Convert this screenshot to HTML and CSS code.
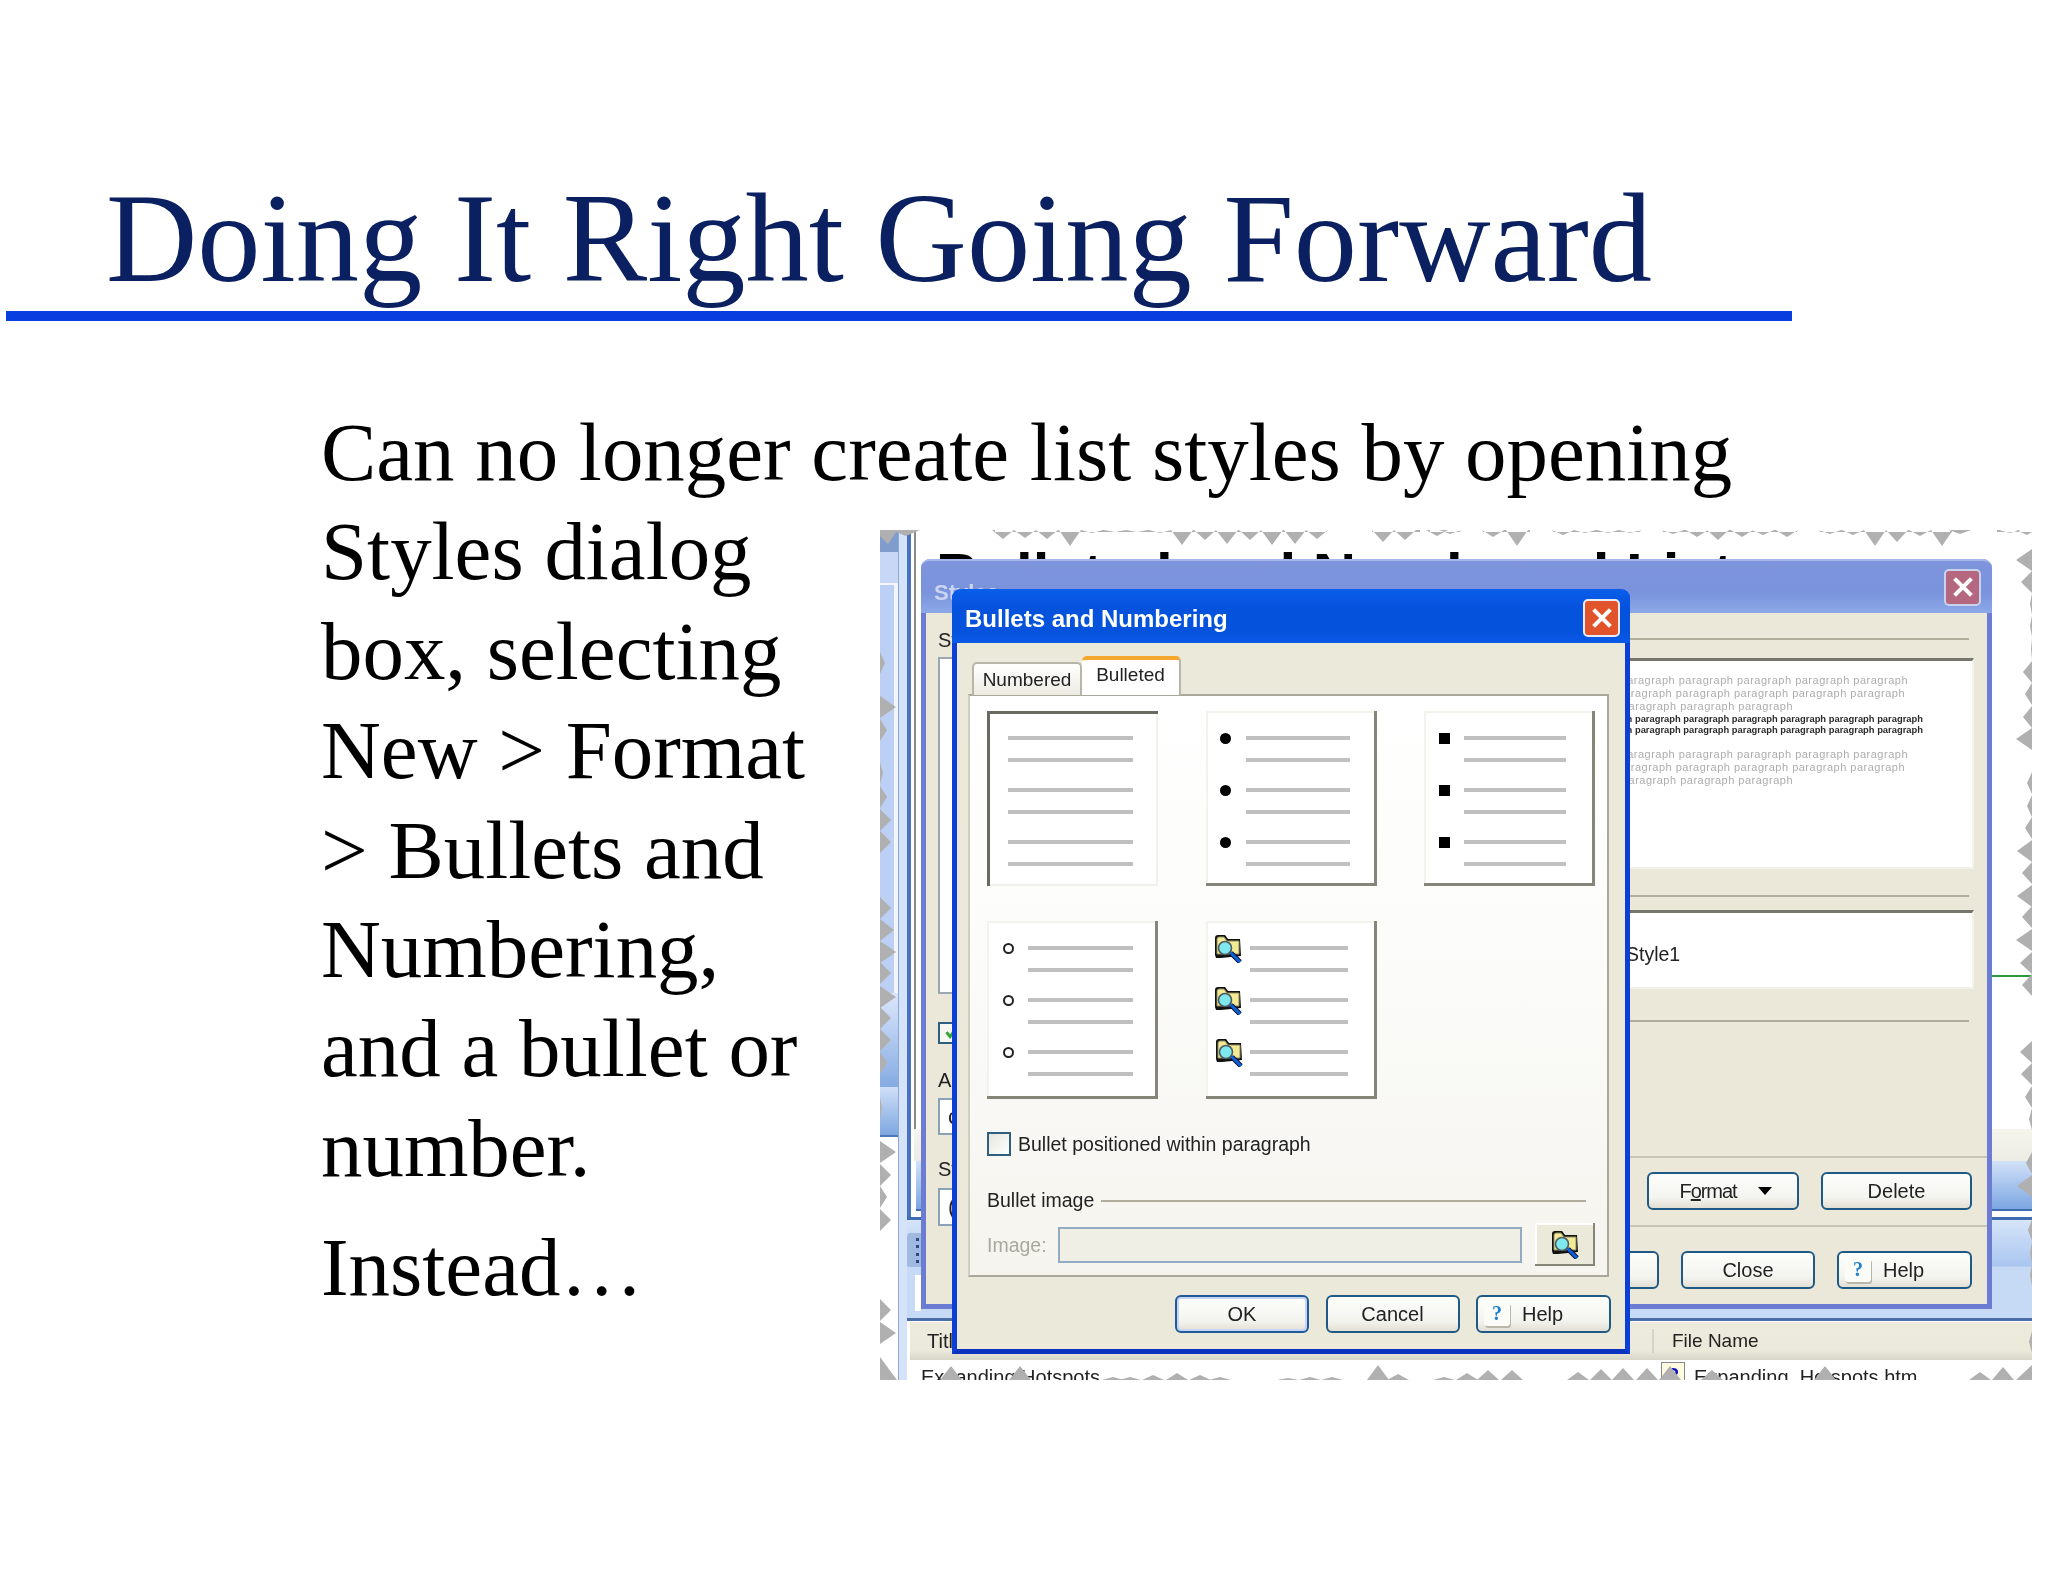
FILE: index.html
```html
<!DOCTYPE html>
<html lang="en">
<head>
<meta charset="utf-8">
<title>Doing It Right Going Forward</title>
<link rel="stylesheet" href="styles.css">
</head>
<body>
<svg class="defs" width="0" height="0" aria-hidden="true">
  <symbol id="folder" viewBox="0 0 28 29">
    <path d="M1 21V4Q1 1 4 1H11L14 5H26L27 22L7 24H2Z" fill="#111"/>
    <path d="M3 19V5Q3 3 5 3H10L13 7H25V20H3Z" fill="#f3ea96" stroke="#8d8a5c" stroke-width="1"/>
    <path d="M17 19L26 28" stroke="#101030" stroke-width="5"/>
    <path d="M16 18L26 28" stroke="#0a62d8" stroke-width="3"/>
    <circle cx="11" cy="14" r="6.5" fill="#7fe8ee" stroke="#4d5a60" stroke-width="1.6"/>
  </symbol>
  <symbol id="closex" viewBox="0 0 20 20">
    <path d="M3 3L17 17M17 3L3 17" stroke="#fff" stroke-width="3.4" fill="none"/>
  </symbol>
</svg>

<main class="slide">
  <h1 class="title">Doing It Right Going Forward</h1>
  <section class="content">
    <p class="lead">Can no longer create list styles by opening</p>
    <div class="columns">
      <div class="copy">
        <p class="para">Styles dialog<br>box, selecting<br>New &gt; Format<br>&gt; Bullets and<br>Numbering,<br>and a bullet or<br>number.</p>
        <p class="para para-next">Instead…</p>
      </div>

      <figure class="shot">
        <div class="app">
          <div class="nav">
            <div class="nav-cap"></div>
            <div class="nav-btn"></div>
            <div class="nav-list"></div>
            <div class="nav-blue-a"></div>
            <div class="nav-blue-b"></div>
            <div class="nav-rest"></div>
          </div>
          <div class="split"></div>
          <div class="doc">
            <div class="doc-top">
              <div class="doc-page">
                <div class="doc-heading">Bulleted and Numbered Lists</div>
                <div class="doc-green"></div>
              </div>
              <div class="doc-band-pale"></div>
              <div class="doc-band-blue"></div>
            </div>
            <div class="doc-mid">
              <div class="grip"><i></i><i></i><i></i><i></i></div>
              <div class="mid-white"></div>
            </div>
            <div class="doc-list">
              <div class="list-head">
                <span class="th-title">Title</span>
                <span class="th-file">File Name</span>
              </div>
              <div class="list-row">
                <span class="td-title">Expanding Hotspots</span>
                <span class="td-icon">?</span>
                <span class="td-file">Expanding_Hotspots.htm</span>
              </div>
            </div>
          </div>
        </div>

        <div class="win-styles">
          <div class="styles-bar">
            <span class="styles-name">Styles</span>
            <span class="styles-close"><svg class="x-icon"><use href="#closex"/></svg></span>
          </div>
          <div class="styles-body">
            <div class="s-left">
              <div class="s-label">Styles:</div>
              <div class="s-list"></div>
              <div class="s-check"><svg viewBox="0 0 20 20" class="s-tick"><path d="M5 9L9 14L16 5" stroke="#35a43a" stroke-width="3.4" fill="none"/></svg></div>
              <div class="s-label s-label-a">Apply to:</div>
              <div class="s-select">current</div>
              <div class="s-label s-label-b">Style:</div>
              <div class="s-select s-select-b">(none)</div>
            </div>
            <div class="s-right">
              <div class="s-rule s-rule-1"></div>
              <div class="s-preview">
                <div class="pv pv-gray">paragraph paragraph paragraph paragraph paragraph paragraph</div>
                <div class="pv pv-gray pv-b">paragraph paragraph paragraph paragraph paragraph paragraph</div>
                <div class="pv pv-gray pv-c">paragraph paragraph paragraph</div>
                <div class="pv pv-dark">paragraph paragraph paragraph paragraph paragraph paragraph paragraph paragraph</div>
                <div class="pv pv-dark">paragraph paragraph paragraph paragraph paragraph paragraph paragraph paragraph</div>
                <div class="pv pv-gray pv-gap">paragraph paragraph paragraph paragraph paragraph paragraph</div>
                <div class="pv pv-gray pv-b">paragraph paragraph paragraph paragraph paragraph paragraph</div>
                <div class="pv pv-gray pv-c">paragraph paragraph paragraph</div>
              </div>
              <div class="s-rule s-rule-2"></div>
              <div class="s-name-box">Style1</div>
              <div class="s-rule s-rule-3"></div>
              <div class="s-rule s-rule-full s-rule-4"></div>
              <div class="s-actions s-actions-a">
                <button class="btn btn-format"><span class="format-label">F<u>o</u>rmat</span><i class="caret"></i></button>
                <button class="btn btn-delete">Delete</button>
              </div>
              <div class="s-rule s-rule-full s-rule-5"></div>
              <div class="s-actions s-actions-b">
                <button class="btn btn-std">OK</button>
                <button class="btn btn-std">Close</button>
                <button class="btn btn-help"><span class="help-tile">?</span><span>Help</span></button>
              </div>
            </div>
          </div>
        </div>

        <div class="win-bullets">
          <div class="b-bar">
            <span class="b-name">Bullets and Numbering</span>
            <span class="b-close"><svg class="x-icon"><use href="#closex"/></svg></span>
          </div>
          <div class="b-body">
            <div class="tabs">
              <span class="tab">Numbered</span>
              <span class="tab tab-on">Bulleted</span>
            </div>
            <div class="panel">
              <div class="opts">
                <div class="opt opt-none is-selected">
                  <div class="group"><span></span><b class="ln"></b><span></span><b class="ln"></b></div>
                  <div class="group"><span></span><b class="ln"></b><span></span><b class="ln"></b></div>
                  <div class="group"><span></span><b class="ln"></b><span></span><b class="ln"></b></div>
                </div>
                <div class="opt opt-disc">
                  <div class="group"><i class="disc"></i><b class="ln"></b><span></span><b class="ln"></b></div>
                  <div class="group"><i class="disc"></i><b class="ln"></b><span></span><b class="ln"></b></div>
                  <div class="group"><i class="disc"></i><b class="ln"></b><span></span><b class="ln"></b></div>
                </div>
                <div class="opt opt-square">
                  <div class="group"><i class="square"></i><b class="ln"></b><span></span><b class="ln"></b></div>
                  <div class="group"><i class="square"></i><b class="ln"></b><span></span><b class="ln"></b></div>
                  <div class="group"><i class="square"></i><b class="ln"></b><span></span><b class="ln"></b></div>
                </div>
                <div class="opt opt-circle">
                  <div class="group"><i class="circle"></i><b class="ln"></b><span></span><b class="ln"></b></div>
                  <div class="group"><i class="circle"></i><b class="ln"></b><span></span><b class="ln"></b></div>
                  <div class="group"><i class="circle"></i><b class="ln"></b><span></span><b class="ln"></b></div>
                </div>
                <div class="opt opt-image">
                  <div class="group"><svg class="folder"><use href="#folder"/></svg><b class="ln"></b><span></span><b class="ln"></b></div>
                  <div class="group"><svg class="folder"><use href="#folder"/></svg><b class="ln"></b><span></span><b class="ln"></b></div>
                  <div class="group"><svg class="folder folder-shift"><use href="#folder"/></svg><b class="ln"></b><span></span><b class="ln"></b></div>
                </div>
              </div>
              <label class="within"><i class="box"></i><span>Bullet positioned within paragraph</span></label>
              <div class="legend"><span>Bullet image</span><i></i></div>
              <div class="image-row">
                <span class="image-label">Image:</span>
                <span class="image-input"></span>
                <span class="image-browse"><svg class="folder"><use href="#folder"/></svg></span>
              </div>
            </div>
            <div class="b-actions">
              <button class="btn btn-std btn-default">OK</button>
              <button class="btn btn-std">Cancel</button>
              <button class="btn btn-help"><span class="help-tile">?</span><span>Help</span></button>
            </div>
          </div>
        </div>

        <svg class="torn" viewBox="0 0 1152 850" aria-hidden="true">
          <path d="M0 0H40L26 6L16 2L8 14L0 6Z M115 0h332v2h-332z M492 0h48v2h-48z M550 0h30v2h-30z M603 0h47v2h-47z M673 0h87v2h-87z M783 0h134v2h-134z M940 0h130v2h-130z M1117 0h35v2h-35z
          M112 0l11 9l11-9z M134 0l11 8l11-8z M156 0l11 9l11-9z M179 0l11 16l11-16z M201 0l11 3l11-3z M224 0l11 2l11-2z M246 0l11 2l11-2z M269 0l11 3l11-3z M291 0l11 15l11-15z M314 0l11 10l11-10z M336 0l11 14l11-14z M359 0l11 10l11-10z M381 0l11 15l11-15z M404 0l11 14l11-14z M426 0l11 9l11-9z M492 0l11 12l11-12z M514 0l11 10l11-10z M546 0l11 6l11-6z M559 0l11 4l11-4z M602 0l11 7l11-7z M626 0l11 16l11-16z M672 0l11 5l11-5z M694 0l11 3l11-3z M717 0l11 3l11-3z M739 0l11 3l11-3z M782 0l11 4l11-4z M806 0l11 7l11-7z M827 0l11 10l11-10z M851 0l11 7l11-7z M872 0l11 5l11-5z M896 0l11 7l11-7z M939 0l11 4l11-4z M962 0l11 5l11-5z M984 0l11 16l11-16z M1006 0l11 12l11-12z M1029 0l11 6l11-6z M1051 0l11 16l11-16z M1069 0l11 4l11-4z M1119 0l11 3l11-3z M1136 0l11 5l5-3v-2z
          M1152 19l-16 11l16 11z M1152 41l-11 11l11 11z M1152 63l-2 11l2 11z M1152 85l-2 11l2 11z M1152 108l-1 11l1 11z M1152 131l-9 11l9 11z M1152 153l-7 11l7 11z M1152 176l-9 11l9 11z M1152 198l-16 11l16 11z M1152 242l-5 11l5 11z M1152 265l-5 11l5 11z M1152 287l-7 11l7 11z M1152 310l-15 11l15 11z M1152 332l-10 11l10 11z M1152 355l-15 11l15 11z M1152 376l-10 11l10 11z M1152 399l-16 11l16 11z M1152 422l-12 11l12 11z M1152 444l-10 11l10 11z M1152 511l-12 11l12 11z M1152 533l-11 11l11 11z M1152 556l-7 11l7 11z M1152 578l-3 11l3 11z M1152 622l-6 11l6 11z M1152 645l-15 11l15 11z M1152 689l-4 11l4 11z M1152 712l-2 11l2 11z M1152 734l-2 11l2 11z M1152 801l-3 11l3 11z
          M0 122l5 11l-5 11z M0 166l16 11l-16 11z M0 189l7 11l-7 11z M0 232l3 11l-3 11z M0 256l7 11l-7 11z M0 279l11 11l-11 11z M0 301l11 11l-11 11z M0 367l11 11l-11 11z M0 389l14 11l-14 11z M0 411l16 11l-16 11z M0 432l11 11l-11 11z M0 456l16 11l-16 11z M0 477l11 11l-11 11z M0 499l11 11l-11 11z M0 522l7 11l-7 11z M0 567l2 11l-2 11z M0 611l16 11l-16 11z M0 634l11 11l-11 11z M0 656l7 11l-7 11z M0 679l11 11l-11 11z M0 769l11 11l-11 11z M0 792l16 11l-16 11z M0 827L17 850H0z
          M60 850l11-14l11 14z M129 850l11-14l11 14z M222 850l11-3l11 3z M239 850l11-3l11 3z M262 850l11-5l11 5z M286 850l11-7l11 7z M309 850l11-5l11 5z M329 850l11-3l11 3z M397 850l11-2l11 2z M419 850l11-3l11 3z M441 850l11-3l11 3z M487 850l11-15l11 15z M507 850l11-6l11 6z M553 850l11-3l11 3z M576 850l11-7l11 7z M597 850l11-10l11 10z M621 850l11-10l11 10z M687 850l11-8l11 8z M710 850l11-11l11 11z M732 850l11-12l11 12z M756 850l11-12l11 12z M779 850l11-14l11 14z M821 850l11-10l11 10z M934 850l11-14l11 14z M1089 850l11-8l11 8z M1112 850l11-13l11 13z M1136 850l16-15v15z" fill="#b0b0b0"/>
        </svg>
      </figure>
    </div>
  </section>
</main>
</body>
</html>
```

FILE: styles.css
```css
* { box-sizing: border-box; }
html, body { margin: 0; padding: 0; background: #fff; }
body { width: 2048px; height: 1582px; overflow: hidden; font-family: "Liberation Sans", Arial, sans-serif; }
.defs { position: absolute; }

.slide { width: 2048px; height: 1582px; }
.title {
  margin: 0 0 0 6px; width: 1786px; padding: 168px 0 3px 100px;
  font: 400 126.5px/140px "Liberation Serif", "Times New Roman", serif;
  color: #0b2060; white-space: nowrap; border-bottom: 10px solid #0a3de0;
}
.content { padding: 82px 0 0 321px; font: 400 82.9px/99.4px "Liberation Serif", "Times New Roman", serif; color: #000; }
.lead, .para { margin: 0; white-space: nowrap; }
.columns { display: flex; }
.copy { width: 559px; flex: none; }
.para-next { margin-top: 20px; }

/* screenshot */
.shot {
  position: relative; flex: none; margin: 28px 0 0; width: 1152px; height: 850px;
  overflow: hidden; background: #fff; filter: blur(.45px);
  font: 400 20px/24px "Liberation Sans", Arial, sans-serif; color: #222;
}
.torn { position: absolute; left: 0; top: 0; width: 1152px; height: 850px; }

.app { display: flex; width: 100%; height: 100%; }
.nav { width: 18px; flex: none; display: flex; flex-direction: column; }
.nav-cap { height: 22px; background: #7f9ccc; }
.nav-btn { height: 33px; background: #c7d7f5; border-bottom: 2px solid #f4f7fd; }
.nav-list { height: 408px; background: #bccff5; border-right: 4px solid #f2f5fc; }
.nav-blue-a { height: 94px; background: linear-gradient(#dbe7fb, #85abe2); }
.nav-blue-b { height: 50px; background: linear-gradient(#cfdff8, #7ea7e0); border-bottom: 2px solid #4d78b8; }
.nav-rest { flex: 1; background: #fff; }
.split { width: 9px; flex: none; background: #d5e3f8; border-left: 1px solid #8fa8d0; }
.doc { flex: 1; display: flex; flex-direction: column; min-width: 0; }
.doc-top { height: 687px; flex: none; padding-bottom: 6px; border-left: 4px solid #4a70c0; display: flex; flex-direction: column; background: #fff; }
.doc-page { flex: 1; margin-left: 3px; border-left: 2px solid #8a8a86; padding: 15px 0 0 20px; overflow: hidden; }
.doc-heading { font: 700 60px/60px "Liberation Sans", Arial, sans-serif; color: #000; white-space: nowrap; }
.doc-green { height: 2px; margin: 370px 0 0 0; background: #2a9a3a; }
.doc-band-pale { height: 32px; flex: none; margin-left: 3px; background: linear-gradient(#f5f5ee, #ecece4); }
.doc-band-blue { height: 50px; flex: none; margin-left: 5px; background: linear-gradient(#d2e1f8, #7ca6e2); border-bottom: 2px solid #3f6bb0; }
.doc-mid {
  height: 104px; flex: none; padding-top: 13px;
  border-top: 3px solid #3f6bb0; border-bottom: 3px solid #4a6fa8;
  background: linear-gradient(#d6e4f9, #a9c6f0 47%, #c6daf5 48%, #c6daf5);
}
.grip { width: 14px; height: 34px; background: #9fb9e0; border-radius: 4px 0 0 4px; display: flex; flex-direction: column; justify-content: space-around; align-items: flex-end; padding: 2px 2px 2px 0; }
.grip i { width: 3px; height: 3px; background: #2f4a7a; }
.mid-white { width: 6px; height: 36px; margin: 8px 0 0 8px; background: #fff; }
.doc-list { flex: 1; background: #fff; min-height: 0; overflow: hidden; margin-left: 3px; padding-top: 1px; }
.list-head { display: flex; height: 38px; align-items: center; background: linear-gradient(#ecebdd, #ebe9da 75%, #d8d6c8); }
.th-title { width: 742px; padding-left: 17px; flex: none; color: #222; }
.th-file { border-left: 2px solid #d6d4c6; padding-left: 18px; color: #222; line-height: 24px; font-size: 19px; }
.list-row { display: flex; padding-top: 5px; white-space: nowrap; color: #222; }
.td-title { width: 751px; padding-left: 11px; flex: none; }
.td-icon { width: 24px; height: 24px; margin-top: -3px; border: 1px solid #888; background: #fffbe0; color: #1010c0; font-weight: 700; text-align: center; flex: none; }
.td-file { padding-left: 9px; }

/* styles dialog */
.win-styles {
  position: absolute; left: 41px; top: 29px; width: 1071px; height: 750px;
  display: flex; flex-direction: column;
  background: #ebe8da; border: 5px solid #6c7cd2; border-top: 0; border-radius: 9px 9px 0 0;
}
.styles-bar {
  height: 54px; flex: none; margin: 0 -5px; padding: 0 11px 0 13px;
  display: flex; align-items: center; justify-content: space-between;
  border-radius: 9px 9px 0 0; border-top: 2px solid #a5b8ea;
  background: linear-gradient(#7e95dd, #7a93dc 60%, #8ba8e8);
}
.styles-name { font: 700 22px/26px "Liberation Sans", Arial, sans-serif; color: #c9d5f1; margin-top: 12px; }
.styles-close { width: 37px; height: 37px; border-radius: 5px; border: 2px solid #c9d2ec; background: #b4677e; display: flex; align-items: center; justify-content: center; margin-top: 0; }
.x-icon { width: 24px; height: 24px; }
.styles-body { flex: 1; display: flex; min-height: 0; }
.s-left { width: 314px; flex: none; padding: 15px 0 0 12px; }
.s-label { height: 24px; white-space: nowrap; }
.s-label-a { margin-top: 24px; }
.s-label-b { margin-top: 22px; }
.s-list { height: 337px; margin-top: 5px; background: #fff; border: 2px solid #9aa7b4; }
.s-check { width: 40px; height: 22px; margin-top: 28px; border: 2px solid #2c5f80; background: #f7f7f2; }
.s-tick { display: block; width: 20px; height: 18px; margin-left: 1px; }
.s-select { height: 37px; margin-top: 6px; background: #fff; border: 2px solid #8aa2b6; padding: 5px 0 0 8px; font-size: 22px; }
.s-select-b { height: 38px; margin-top: 7px; }
.s-right { flex: 1; display: flex; flex-direction: column; min-width: 0; }
.s-rule { height: 2px; flex: none; background: #b1ad9b; margin-right: 18px; }
.s-rule-1 { margin-top: 25px; }
.s-rule-2 { margin-top: 26px; }
.s-rule-3 { margin-top: 31px; }
.s-rule-full { margin-right: 0; background: #c8c5b4; }
.s-rule-4 { margin-top: 134px; }
.s-rule-5 { margin-top: 15px; }
.s-preview {
  height: 211px; margin: 18px 13px 0 0; padding-top: 13px; overflow: hidden;
  background: #fff; border-top: 3px solid #76766c; border-right: 2px solid #f3f2ea; border-bottom: 2px solid #f3f2ea;
}
.pv { text-align: right; white-space: nowrap; overflow: hidden; }
.pv-gray { font-size: 11px; line-height: 13px; letter-spacing: .5px; color: #adadad; padding-right: 64px; }
.pv-b { padding-right: 67px; }
.pv-c { padding-right: 179px; }
.pv-gap { margin-top: 13px; }
.pv-dark { font-size: 9.4px; line-height: 11px; color: #2a2a2a; padding-right: 49px; font-weight: 700; }
.s-name-box {
  height: 79px; margin: 13px 13px 0 0; padding: 29px 0 0 386px;
  background: #fff; border-top: 3px solid #76766c; border-right: 2px solid #f3f2ea; border-bottom: 2px solid #f3f2ea;
  font-size: 19.5px; color: #222;
}
.s-actions { display: flex; justify-content: flex-end; gap: 22px; padding-right: 15px; }
.s-actions-a { margin-top: 14px; }
.s-actions-b { margin-top: 24px; }

/* buttons */
.btn {
  display: flex; align-items: center; justify-content: center; height: 38px; padding: 0; margin: 0;
  border: 2px solid #1f5a86; border-radius: 6px; color: #222;
  background: linear-gradient(#fdfdfb, #f4f4ef 70%, #e2dfd4);
  font: 400 20px/24px "Liberation Sans", Arial, sans-serif;
}
.btn-std { width: 134px; }
.btn-default { border-color: #1e5a9c; box-shadow: inset 0 0 0 2px #c6d6f2; }
.btn-format { width: 152px; gap: 22px; padding-left: 6px; }
.format-label { letter-spacing: -1.1px; }
.btn-delete { width: 151px; }
.btn-help { width: 135px; gap: 12px; justify-content: flex-start; padding-left: 6px; }
.caret { width: 0; height: 0; border-left: 7.5px solid transparent; border-right: 7.5px solid transparent; border-top: 8px solid #000; }
.help-tile {
  width: 26px; height: 24px; border-radius: 3px; text-align: center;
  font: 700 20px/22px "Liberation Serif", serif; color: #1a7fd0;
  background: #fbfbf8; box-shadow: 1px 2px 0 #b9b7aa;
}

/* bullets dialog */
.win-bullets {
  position: absolute; left: 72px; top: 59px; width: 678px; height: 765px;
  display: flex; flex-direction: column; background: #ebe9d9;
  border: 5px solid #0b3fd6; border-top: 0; border-bottom-color: #0a33c0; border-radius: 9px 9px 0 0;
}
.b-bar {
  height: 54px; flex: none; margin: 0 -5px; padding: 3px 10px 0 13px;
  display: flex; align-items: center; justify-content: space-between;
  border-radius: 9px 9px 0 0; background: linear-gradient(#0a5eea, #0552dd 35%, #0552dd 80%, #0a5ae8);
}
.b-name { font: 700 24px/28px "Liberation Sans", Arial, sans-serif; color: #fff; white-space: nowrap; margin-top: 2px; }
.b-close { width: 37px; height: 38px; border-radius: 5px; border: 2px solid #e8ecf8; background: #e0532b; display: flex; align-items: center; justify-content: center; }
.b-body { flex: 1; display: flex; flex-direction: column; min-height: 0; padding: 13px 16px 0 11px; }
.tabs { display: flex; align-items: flex-end; height: 39px; padding-left: 4px; position: relative; z-index: 1; margin-bottom: -1px; }
.tab {
  width: 110px; height: 33px; text-align: center; font-size: 19px; line-height: 32px; color: #222;
  border: 2px solid #b8b6a8; border-bottom: 0; border-radius: 5px 5px 0 0;
  background: linear-gradient(#fff, #ecebe2);
}
.tab-on {
  width: 99px; height: 39px; line-height: 30px; background: #fff;
  border: 0; border-top: 4px solid #f6a72e; border-right: 2px solid #b8b6a8;
}
.panel {
  height: 583px; padding: 16px 12px 0 17px;
  border: 2px solid #a9a89b; border-left-color: #cfcec2;
  background: linear-gradient(#fff, #fbfbf9 50%, #f5f4ee);
}
.opts { display: grid; grid-template-columns: 218.5px 218.5px 171px; grid-template-rows: 175px 178px; row-gap: 35px; margin: -1px 0 0 0; }
.opt {
  width: 171px; padding-top: 25px; display: flex; flex-direction: column; gap: 26px;
  background: #fff; box-shadow: inset -3px -3px 0 #85857a, inset 2px 2px 0 #f3f3ee;
  --mark: 40px; --line: 104px; --lead: 0px;
}
.is-selected { box-shadow: inset 3px 3px 0 #6a6a60, inset -2px -2px 0 #f1f1ec; }
.opt-none { --mark: 0px; --line: 125px; --lead: 21px; }
.opt-square { --line: 102px; }
.opt-circle { --mark: 39px; --line: 105px; --lead: 2px; }
.opt-image { --mark: 44px; --line: 98px; }
.group { display: grid; grid-template-columns: var(--mark) var(--line); grid-template-rows: 4px 4px; row-gap: 18px; padding-left: var(--lead); align-items: center; justify-items: center; }
.ln { display: block; width: 100%; height: 4px; background: #c0c0c0; }
.disc { width: 11px; height: 11px; border-radius: 50%; background: #000; }
.square { width: 11px; height: 11px; background: #000; }
.circle { width: 11px; height: 11px; border-radius: 50%; background: #fff; border: 2px solid #222; }
.folder { width: 28px; height: 29px; display: block; }
.folder-shift { margin-left: 3px; }
.within { display: flex; align-items: center; gap: 7px; margin-top: 33px; font-size: 19.5px; color: #222; }
.box { width: 24px; height: 24px; border: 2px solid #2c5f80; background: linear-gradient(135deg, #e6e6de, #fff); }
.legend { display: flex; align-items: center; gap: 7px; margin: 32px 9px 0 0; font-size: 19.5px; color: #222; }
.legend i { flex: 1; height: 2px; background: #b1ad9b; margin-top: 2px; }
.image-row { display: flex; align-items: center; margin-top: 11px; }
.image-label { width: 71px; font-size: 19.5px; color: #a9a89f; }
.image-input { width: 467px; height: 36px; border: 2px solid #92abc2; background: #f0efe6; }
.image-browse { margin-left: 13px; width: 60px; height: 43px; background: #ebe9d9; box-shadow: inset -2px -2px 0 #85857a, inset 2px 2px 0 #fff; display: flex; align-items: center; justify-content: center; }
.b-actions { display: flex; justify-content: flex-end; gap: 16.5px; margin-top: 18px; padding-right: 0; margin-right: -2px; }
```
